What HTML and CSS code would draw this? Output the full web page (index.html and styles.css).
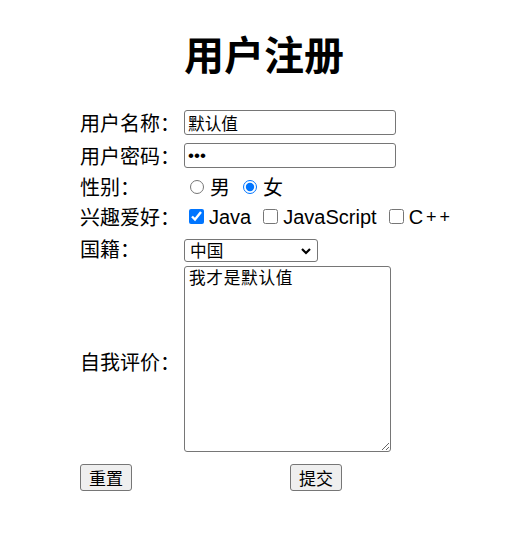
FILE: index.html
```html
<!DOCTYPE html>
<html lang="zh-CN">
<head>
<meta charset="utf-8">
<title>用户注册</title>
<link rel="stylesheet" href="styles.css">
</head>
<body>
<h1 class="title">用户注册</h1>
<form class="form">
  <div class="row row-name">
    <label class="lbl">用户名称：</label>
    <div class="field"><input class="text" type="text" value="默认值"></div>
  </div>
  <div class="row row-pass">
    <label class="lbl">用户密码：</label>
    <div class="field"><input class="text pass" type="password" value="123"></div>
  </div>
  <div class="row row-sex">
    <label class="lbl">性别：</label>
    <div class="field opts">
      <label class="opt"><input class="radio" type="radio" name="sex">男</label>
      <label class="opt"><input class="radio" type="radio" name="sex" checked>女</label>
    </div>
  </div>
  <div class="row row-hobby">
    <label class="lbl">兴趣爱好：</label>
    <div class="field opts">
      <label class="opt latin"><input class="check" type="checkbox" checked>Java</label>
      <label class="opt latin"><input class="check" type="checkbox">JavaScript</label>
      <label class="opt latin"><input class="check" type="checkbox">C<span class="plus">+</span><span class="plus">+</span></label>
    </div>
  </div>
  <div class="row row-country">
    <label class="lbl">国籍：</label>
    <div class="field field-end">
      <span class="select-wrap">
        <select class="select"><option>中国</option><option>美国</option></select>
        <svg class="chev" width="10" height="7" viewBox="0 0 10 7"><path d="M1 1 L5 5 L9 1" fill="none" stroke="#000" stroke-width="2.2"/></svg>
      </span>
    </div>
  </div>
  <div class="row row-desc">
    <label class="lbl">自我评价：</label>
    <div class="field field-top"><textarea class="area">我才是默认值</textarea></div>
  </div>
  <div class="row row-btns">
    <div class="lbl"><button type="reset" class="btn">重置</button></div>
    <div class="field field-center"><button type="submit" class="btn">提交</button></div>
  </div>
</form>
</body>
</html>
```

FILE: styles.css
```css
html, body {
  margin: 0;
  padding: 0;
  background: #fff;
}
body {
  font-family: "Noto Sans CJK SC", "Liberation Sans", sans-serif;
  color: #000;
}
.title {
  margin: 33px 0 33px 3px;
  font-size: 40px;
  line-height: 40px;
  font-weight: bold;
  text-align: center;
}
.form {
  width: 368px;
  margin: 0 0 0 80px;
  display: flex;
  flex-direction: column;
  font-size: 20px;
}
.row {
  display: flex;
  align-items: center;
}
.row-name, .row-pass { height: 33px; }
.row-sex { height: 29px; }
.row-hobby { height: 31px; }
.row-country { height: 34px; }
.row-desc { height: 192px; }
.row-btns { height: 39px; }
.lbl {
  width: 104px;
  flex: none;
  line-height: 26px;
  white-space: nowrap;
}
.field {
  flex: 1;
  display: flex;
  align-items: center;
  height: 100%;
}
.field-end { align-items: flex-end; padding-bottom: 4px; box-sizing: border-box; }
.field-top { align-items: flex-start; }
.field-center { justify-content: center; }
.text {
  box-sizing: border-box;
  width: 212px;
  height: 25px;
  margin: 0;
  border: 1px solid #767676;
  border-radius: 3px;
  padding: 0 3px;
  font-family: "Noto Sans CJK SC", "Liberation Sans", sans-serif;
  font-size: 16.67px;
  color: #000;
  outline: none;
}
.pass {
  font-family: "Liberation Sans", sans-serif;
  font-size: 17px;
  letter-spacing: 0;
  padding-left: 3px;
}
.opts { gap: 7px; }
.opt {
  display: inline-flex;
  align-items: center;
  white-space: nowrap;
  line-height: 26px;
}
.latin { font-family: "Liberation Sans", "Noto Sans CJK SC", sans-serif; }
.plus { margin-left: 3px; font-size: 18px; }
.radio {
  width: 14px;
  height: 14px;
  margin: 0 6px;
}
.check {
  width: 15px;
  height: 15px;
  margin: 0 5px;
}
.select-wrap {
  position: relative;
  display: block;
  width: 134px;
  height: 23px;
}
.select {
  appearance: none;
  -webkit-appearance: none;
  display: block;
  box-sizing: border-box;
  width: 134px;
  height: 23px;
  margin: 0;
  padding: 0 0 0 5px;
  border: 1px solid #767676;
  border-radius: 3px;
  background: #fff;
  font-family: "Noto Sans CJK SC", "Liberation Sans", sans-serif;
  font-size: 16.67px;
  line-height: 21px;
  color: #000;
}
.chev {
  position: absolute;
  right: 7px;
  top: 9px;
  pointer-events: none;
}
.area {
  display: block;
  box-sizing: border-box;
  width: 207px;
  height: 186px;
  margin: 0;
  padding: 3px 4px;
  border: 1px solid #767676;
  border-radius: 3px;
  font-family: "Liberation Mono", "Noto Sans CJK SC", monospace;
  font-size: 16.67px;
  line-height: 20px;
  letter-spacing: 0.7px;
  color: #000;
  resize: both;
}
.btn {
  box-sizing: border-box;
  width: 52px;
  height: 27px;
  margin: 0;
  padding: 0;
  border: 1px solid #767676;
  border-radius: 3px;
  background: #efefef;
  font-family: "Noto Sans CJK SC", "Liberation Sans", sans-serif;
  font-size: 17px;
  line-height: 25px;
  color: #000;
}
```
